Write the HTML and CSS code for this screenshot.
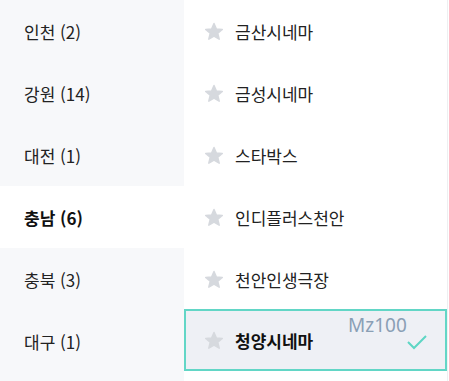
FILE: index.html
```html
<!DOCTYPE html>
<html lang="ko">
  <head>
    <meta charset="UTF-8" />
    <title>극장 선택</title>
    <link rel="stylesheet" href="styles.css">
  </head>
  <body>
    <div class="picker">
      <ul class="regions">
        <li>인천 (2)</li>
        <li>강원 (14)</li>
        <li>대전 (1)</li>
        <li class="active">충남 (6)</li>
        <li>충북 (3)</li>
        <li>대구 (1)</li>
      </ul>
      <ul class="theaters">
        <li><svg class="star" viewBox="0 0 20 19"><path d="M10 1.5 L12.4 7 L18.3 7.4 L13.8 11.3 L15.2 17.2 L10 14.1 L4.8 17.2 L6.2 11.3 L1.7 7.4 L7.6 7 Z"/></svg>금산시네마</li>
        <li><svg class="star" viewBox="0 0 20 19"><path d="M10 1.5 L12.4 7 L18.3 7.4 L13.8 11.3 L15.2 17.2 L10 14.1 L4.8 17.2 L6.2 11.3 L1.7 7.4 L7.6 7 Z"/></svg>금성시네마</li>
        <li><svg class="star" viewBox="0 0 20 19"><path d="M10 1.5 L12.4 7 L18.3 7.4 L13.8 11.3 L15.2 17.2 L10 14.1 L4.8 17.2 L6.2 11.3 L1.7 7.4 L7.6 7 Z"/></svg>스타박스</li>
        <li><svg class="star" viewBox="0 0 20 19"><path d="M10 1.5 L12.4 7 L18.3 7.4 L13.8 11.3 L15.2 17.2 L10 14.1 L4.8 17.2 L6.2 11.3 L1.7 7.4 L7.6 7 Z"/></svg>인디플러스천안</li>
        <li><svg class="star" viewBox="0 0 20 19"><path d="M10 1.5 L12.4 7 L18.3 7.4 L13.8 11.3 L15.2 17.2 L10 14.1 L4.8 17.2 L6.2 11.3 L1.7 7.4 L7.6 7 Z"/></svg>천안인생극장</li>
        <li class="selected">
          <svg class="star" viewBox="0 0 20 19"><path d="M10 1.5 L12.4 7 L18.3 7.4 L13.8 11.3 L15.2 17.2 L10 14.1 L4.8 17.2 L6.2 11.3 L1.7 7.4 L7.6 7 Z"/></svg>청양시네마
          <span class="tag">Mz100</span>
          <svg class="check" width="22" height="16" viewBox="0 0 22 16">
            <path d="M2 8 L8 14 L20 2" fill="none" stroke="#5dd6c4" stroke-width="2"/>
          </svg>
        </li>
      </ul>
    </div>
  </body>
</html>
```

FILE: styles.css
```css
body {
  margin: 0;
  font-family: "Noto Sans CJK KR", "Noto Sans", sans-serif;
  color: #222;
  background: #fff;
}

ul {
  list-style: none;
  margin: 0;
  padding: 0;
}

.picker {
  display: flex;
  height: 381px;
}

.regions {
  width: 184px;
  background-color: #f7f8fa;
}
.regions li {
  height: 62px;
  display: flex;
  align-items: center;
  padding-left: 24px;
  font-size: 17px;
}
.regions li.active {
  background-color: #fff;
  font-weight: bold;
  color: #111;
}

.theaters {
  width: 263px;
  border-right: 1px solid #eeeff1;
}
.theaters li {
  height: 62px;
  display: flex;
  align-items: center;
  padding-left: 20px;
  font-size: 17px;
  position: relative;
  box-sizing: border-box;
}
.star {
  width: 20px;
  height: 19px;
  margin-right: 11px;
  fill: #d6d9de;
  stroke: #d6d9de;
  stroke-width: 1.5;
  stroke-linejoin: round;
}
.theaters li.selected {
  margin-top: -1px;
  padding-left: 18px;
  background-color: #eef0f5;
  border: 2px solid #62d6c6;
  font-weight: bold;
  color: #111;
}
.tag {
  position: absolute;
  top: 1px;
  left: 162px;
  font-weight: normal;
  font-family: "Noto Sans", sans-serif;
  font-size: 19px;
  color: #8a9fb5;
}
.check {
  position: absolute;
  top: 23px;
  left: 220px;
}
```
